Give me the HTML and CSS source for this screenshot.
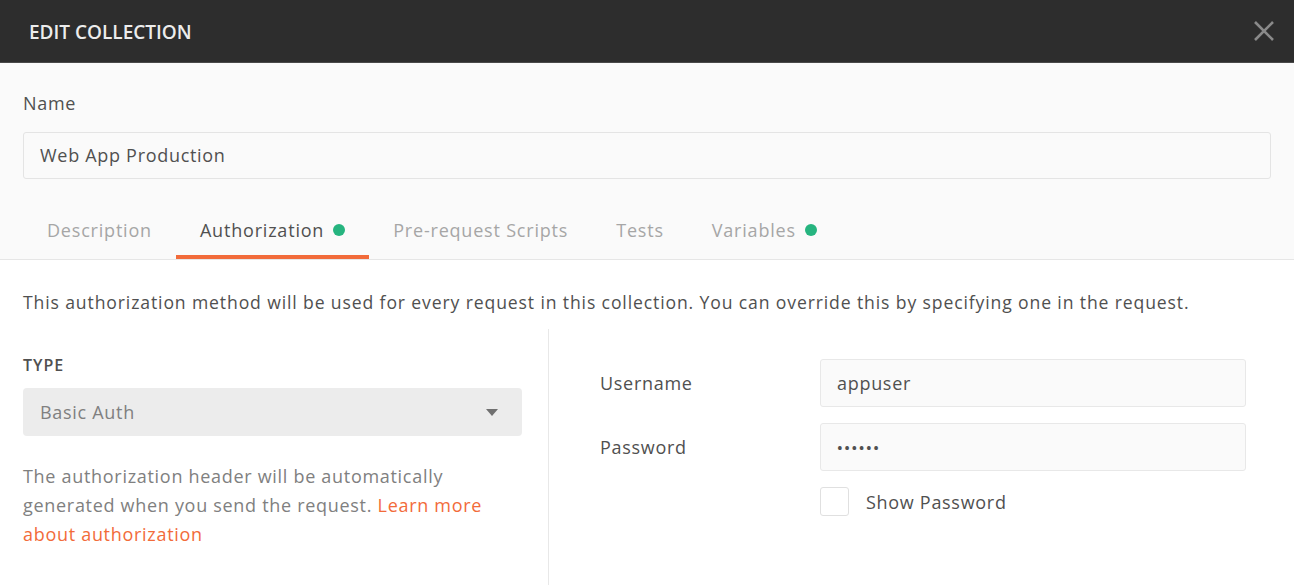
FILE: index.html
```html
<!DOCTYPE html>
<html>
<head>
<meta charset="utf-8">
<link rel="stylesheet" href="styles.css">
</head>
<body>
<div class="modal">
  <div class="header">
    <div class="title">EDIT COLLECTION</div>
    <svg class="close" width="22" height="22" viewBox="0 0 22 22"><path d="M2 2 L20 20 M20 2 L2 20" stroke="#8a8a8a" stroke-width="2.6" fill="none"/></svg>
  </div>
  <div class="top">
    <div class="label">Name</div>
    <div class="name-input">Web App Production</div>
    <div class="tabs">
      <div class="tab">Description</div>
      <div class="tab active">Authorization<span class="dot"></span></div>
      <div class="tab">Pre-request Scripts</div>
      <div class="tab">Tests</div>
      <div class="tab">Variables<span class="dot"></span></div>
    </div>
  </div>
  <div class="content">
    <div class="intro">This authorization method will be used for every request in this collection. You can override this by specifying one in the request.</div>
    <div class="auth">
      <div class="left">
        <div class="type-label">TYPE</div>
        <div class="select">
          <span>Basic Auth</span>
          <svg width="12" height="7" viewBox="0 0 12 7"><path d="M0 0 H12 L6 7 Z" fill="#707070"/></svg>
        </div>
        <div class="help">The authorization header will be automatically generated when you send the request. <a class="link">Learn more about authorization</a></div>
      </div>
      <div class="right">
        <div class="row">
          <div class="field-label">Username</div>
          <div class="field">appuser</div>
        </div>
        <div class="row">
          <div class="field-label">Password</div>
          <div class="field pw">••••••</div>
        </div>
        <div class="check-row">
          <span class="checkbox"></span>
          <span>Show Password</span>
        </div>
      </div>
    </div>
  </div>
</div>
</body>
</html>
```
FILE: styles.css
```css
html, body {
  margin: 0;
  padding: 0;
  background: #ffffff;
}
body {
  font-family: "Open Sans", "Noto Sans", sans-serif;
  color: #505050;
  width: 1294px;
  height: 585px;
  overflow: hidden;
  letter-spacing: 0.7px;
}
.header {
  height: 62px;
  background: #2d2d2d;
  border-bottom: 1px solid #4a4a4a;
  display: flex;
  align-items: center;
  justify-content: space-between;
  padding: 0 19px 0 29px;
}
.title {
  color: #ececec;
  font-size: 19px;
  font-weight: 600;
  letter-spacing: 0;
  margin-top: 1px;
}
.close {
  display: block;
}
.top {
  background: #fafafa;
  padding: 28px 0 0 0;
  border-bottom: 1px solid #e6e6e6;
}
.label {
  font-size: 18px;
  line-height: 24px;
  padding: 0 23px;
}
.name-input {
  margin: 17px 23px 0 23px;
  height: 45px;
  border: 1px solid #e4e4e4;
  border-radius: 3px;
  background: #fafafa;
  font-size: 18px;
  line-height: 45px;
  padding: 0 16px;
}
.tabs {
  display: flex;
  margin-top: 18px;
  padding-left: 23px;
}
.tab {
  display: flex;
  align-items: center;
  padding: 21px 24px 13px 24px;
  line-height: 24px;
  font-size: 18px;
  letter-spacing: 0.8px;
  color: #a6a6a6;
  border-bottom: 4px solid transparent;
}
.tab.active {
  color: #505050;
  border-bottom-color: #f26b3a;
}
.dot {
  width: 12px;
  height: 12px;
  border-radius: 50%;
  background: #26b47f;
  margin-left: 9px;
}
.content {
  background: #ffffff;
}
.intro {
  font-size: 17.6px;
  line-height: 24px;
  letter-spacing: 0.87px;
  padding: 30px 23px 0 23px;
}
.auth {
  display: flex;
  margin-top: 15px;
}
.left {
  width: 499px;
  padding: 25px 26px 40px 23px;
  border-right: 1px solid #e8e8e8;
}
.type-label {
  font-size: 16px;
  font-weight: 600;
  line-height: 22px;
  letter-spacing: 1px;
}
.select {
  margin-top: 12px;
  height: 48px;
  background: #ececec;
  border-radius: 4px;
  display: flex;
  align-items: center;
  justify-content: space-between;
  padding: 0 24px 0 17px;
  font-size: 18px;
  color: #808080;
}
.help {
  margin-top: 26px;
  font-size: 18px;
  line-height: 29px;
  color: #808080;
}
.link {
  color: #f26b3a;
}
.right {
  flex: 1;
  padding: 30px 48px 0 51px;
}
.row {
  display: flex;
  align-items: center;
  margin-bottom: 16px;
}
.field-label {
  width: 220px;
  font-size: 18px;
}
.field {
  flex: 1;
  height: 46px;
  border: 1px solid #e8e8e8;
  border-radius: 3px;
  background: #fafafa;
  font-size: 18px;
  line-height: 46px;
  padding: 0 16px;
}
.field.pw {
  font-size: 15px;
  letter-spacing: 1.6px;
  font-weight: 600;
}
.check-row {
  display: flex;
  align-items: center;
  margin-left: 220px;
  font-size: 18px;
  margin-top: 2px;
}
.checkbox {
  width: 27px;
  height: 27px;
  border: 1px solid #e0e0e0;
  border-radius: 3px;
  background: #fff;
  margin-right: 17px;
}
```
